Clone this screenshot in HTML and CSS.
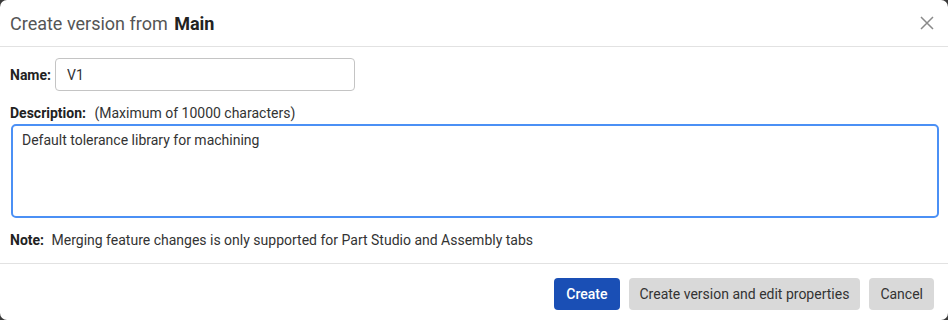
FILE: index.html
```html
<!DOCTYPE html>
<html lang="en">
<head>
  <meta charset="UTF-8">
  <title>Create version</title>
  <link rel="stylesheet" href="styles.css">
</head>
<body>
  <div class="dialog">
    <header class="dialog-header">
      <h1>Create version from <b>Main</b></h1>
      <button class="close" aria-label="Close">
        <svg width="14" height="14" viewBox="0 0 14 14"><path d="M1 1L13 13M13 1L1 13" stroke="#8a8a8a" stroke-width="1.5" fill="none"/></svg>
      </button>
    </header>

    <div class="dialog-body">
      <div class="name-row">
        <label for="nome">Name:</label>
        <input id="nome" type="text" value="V1">
      </div>

      <div class="desc-label"><b>Description:</b> (Maximum of 10000 characters)</div>
      <textarea class="desc">Default tolerance library for machining</textarea>

      <p class="note"><b>Note:</b> Merging feature changes is only supported for Part Studio and Assembly tabs</p>
    </div>

    <footer class="dialog-footer">
      <button class="btn primary">Create</button>
      <button class="btn">Create version and edit properties</button>
      <button class="btn">Cancel</button>
    </footer>
  </div>
</body>
</html>
```

FILE: styles.css
```css
html, body { margin: 0; padding: 0; background: #3a3a3a; }
body { font-family: Roboto, "Noto Sans", sans-serif; font-size: 14px; color: #333; }
.dialog { width: 948px; height: 320px; background: white; border-radius: 7px; overflow: hidden; }

.dialog-header { height: 47px; box-sizing: border-box; border-bottom: 1px solid #e2e2e2; display: flex; align-items: center; justify-content: space-between; padding: 0 14px 0 10px; }
.dialog-header h1 { margin: 0; font-size: 18px; font-weight: 400; color: #555; }
.dialog-header h1 b { font-weight: 700; color: #222; margin-left: 2px; }
.close { background: none; border: none; padding: 0; width: 14px; height: 14px; display: flex; align-items: center; justify-content: center; cursor: pointer; }

.dialog-body { height: 216px; box-sizing: border-box; padding: 11px 9px 0 10px; }
.name-row { display: flex; align-items: center; gap: 4px; }
.name-row label { font-weight: 700; color: #222; }
.name-row input { width: 300px; height: 33px; box-sizing: border-box; border: 1px solid #c4c4c4; border-radius: 4px; padding: 0 11px; font: inherit; color: #333; }

.desc-label { margin-top: 14px; color: #333; }
.desc-label b { font-weight: 700; color: #222; margin-right: 5px; }
.desc { display: block; margin-top: 3px; margin-left: 1px; width: 928px; height: 94px; box-sizing: border-box; border: 2px solid #4b90f5; border-radius: 5px; padding: 6px 9px; font: inherit; color: #333; resize: none; outline: none; }

.note { margin: 14px 0 0; color: #333; }
.note b { font-weight: 700; color: #222; margin-right: 4px; }

.dialog-footer { height: 57px; box-sizing: border-box; border-top: 1px solid #e2e2e2; display: flex; justify-content: flex-end; align-items: flex-start; gap: 9px; padding: 14px 14px 0 0; }
.btn { height: 32px; border: none; border-radius: 4px; background: #d9d9d9; color: #333; font: inherit; padding: 0 11px; cursor: pointer; }
.btn.primary { background: #1a4fb5; color: white; padding: 0 12px; font-weight: 500; }
```
